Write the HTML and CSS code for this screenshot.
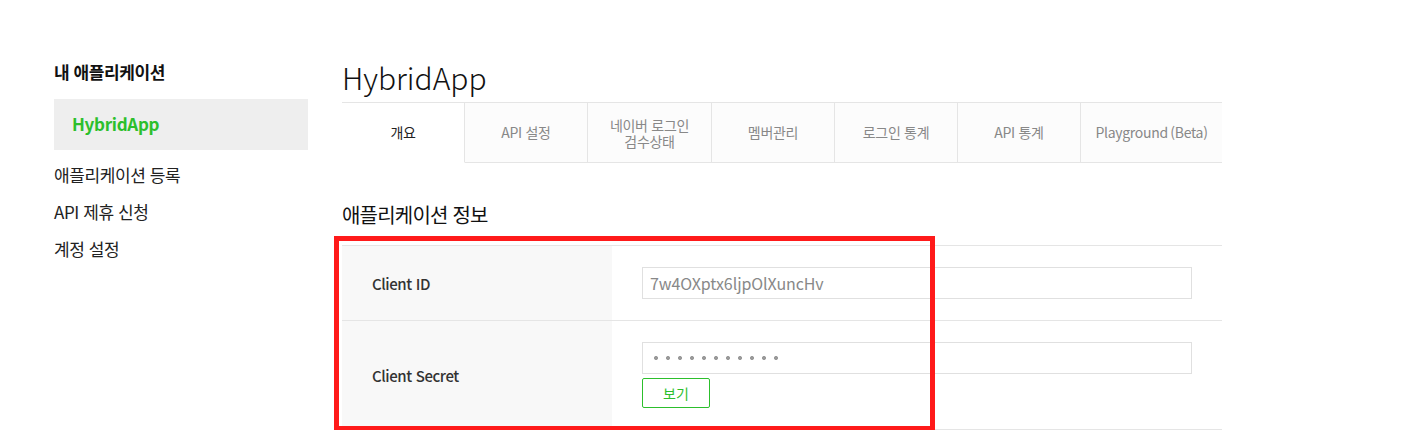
FILE: index.html
```html
<!DOCTYPE html>
<html lang="ko">
<head>
<meta charset="utf-8">
<title>HybridApp</title>
<link rel="stylesheet" href="styles.css">
</head>
<body>
<div class="page">
  <aside class="sidebar">
    <h2 class="side-title">내 애플리케이션</h2>
    <div class="side-active">HybridApp</div>
    <ul class="side-menu">
      <li>애플리케이션 등록</li>
      <li>API 제휴 신청</li>
      <li>계정 설정</li>
    </ul>
  </aside>
  <main class="main">
    <h1 class="app-title">HybridApp</h1>
    <nav class="tabs">
      <div class="tab active">개요</div>
      <div class="tab">API 설정</div>
      <div class="tab wide"><span class="tab-line">네이버 로그인</span><span class="tab-line">검수상태</span></div>
      <div class="tab">멤버관리</div>
      <div class="tab">로그인 통계</div>
      <div class="tab">API 통계</div>
      <div class="tab last">Playground&thinsp;(Beta)</div>
    </nav>
    <h3 class="section-title">애플리케이션 정보</h3>
    <div class="info">
      <div class="row">
        <div class="label">Client ID</div>
        <div class="value">
          <div class="field">7w4OXptx6ljpOlXuncHv</div>
        </div>
      </div>
      <div class="row">
        <div class="label">Client Secret</div>
        <div class="value">
          <div class="field"><span class="dots"></span></div>
          <button class="show-btn">보기</button>
        </div>
      </div>
      <div class="highlight"></div>
    </div>
  </main>
</div>
</body>
</html>
```
FILE: styles.css
```css
* { box-sizing: border-box; }
body {
  margin: 0;
  background: #fff;
  font-family: "Noto Sans CJK KR", "Noto Sans", sans-serif;
  color: #222;
}
.page {
  display: flex;
  padding: 60px 0 0 54px;
}
.sidebar {
  width: 254px;
  flex: none;
}
.side-title {
  margin: 0;
  font-size: 17px;
  font-weight: 700;
  line-height: 24px;
  letter-spacing: -0.4px;
  color: #111;
}
.side-active {
  margin-top: 15px;
  height: 51px;
  line-height: 49px;
  padding-left: 18px;
  background: #eeeeee;
  color: #2cbf2c;
  font-size: 17px;
  font-weight: 700;
  letter-spacing: -0.3px;
}
.side-menu {
  list-style: none;
  margin: 6px 0 0;
  padding: 0;
}
.side-menu li {
  line-height: 37px;
  font-size: 17px;
  letter-spacing: -0.4px;
  color: #222;
}
.main {
  margin-left: 34px;
  width: 880px;
}
.app-title {
  margin: 0 0 8px;
  font-size: 30px;
  font-weight: 300;
  line-height: 34px;
  color: #111;
}
.tabs {
  display: flex;
  border-top: 1px solid #e5e5e5;
  height: 61px;
}
.tab {
  width: 123px;
  flex: none;
  display: flex;
  flex-direction: column;
  align-items: center;
  justify-content: center;
  text-align: center;
  font-size: 14px;
  line-height: 17px;
  color: #888;
  background: #fcfcfc;
  border-right: 1px solid #e5e5e5;
  border-bottom: 1px solid #e5e5e5;
  letter-spacing: -0.3px;
}
.tab-line {
  display: block;
  line-height: 16px;
}
.tab.wide { width: 124px; }
.tab.active {
  background: #fff;
  color: #222;
  border-bottom-color: #fff;
}
.tab.last {
  flex: 1;
  border-right: none;
}
.section-title {
  margin: 37px 0 15px;
  font-size: 20px;
  font-weight: 400;
  line-height: 30px;
  letter-spacing: -0.8px;
  color: #111;
}
.info {
  position: relative;
  border-top: 1px solid #e5e5e5;
}
.row {
  display: flex;
  border-bottom: 1px solid #e5e5e5;
}
.row:first-child { min-height: 75px; }
.label {
  width: 270px;
  flex: none;
  background: #f8f8f8;
  padding-left: 30px;
  display: flex;
  align-items: center;
  font-size: 15px;
  font-weight: 500;
  letter-spacing: -0.4px;
  color: #333;
}
.value {
  flex: 1;
  padding: 21px 30px;
  display: flex;
  flex-direction: column;
  justify-content: center;
  gap: 4px;
}
.field {
  height: 32px;
  border: 1px solid #e0e0e0;
  padding-left: 7px;
  display: flex;
  align-items: center;
  font-size: 16px;
  color: #888;
  letter-spacing: -0.1px;
}
.dots {
  display: block;
  width: 132px;
  height: 6px;
  background: radial-gradient(circle, #9a9a9a 1.7px, transparent 2.3px) 0 0 / 12px 6px repeat-x;
}
.show-btn {
  width: 68px;
  height: 30px;
  border: 1px solid #2cbf2c;
  border-radius: 2px;
  background: #fff;
  color: #2cbf2c;
  font-family: inherit;
  font-size: 14px;
  padding: 0;
  cursor: pointer;
}
.highlight {
  position: absolute;
  left: -8px;
  top: -10px;
  width: 601px;
  height: 195px;
  border: 5px solid #ff1a1a;
  pointer-events: none;
}
```
